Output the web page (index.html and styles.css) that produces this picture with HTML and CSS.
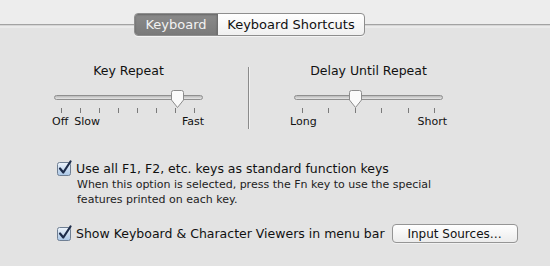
FILE: index.html
```html
<!DOCTYPE html>
<html>
<head>
<meta charset="utf-8">
<link rel="stylesheet" href="styles.css">
</head>
<body>
<div class="toolbar">
  <div class="segmented">
    <div class="seg seg-on">Keyboard</div>
    <div class="seg">Keyboard Shortcuts</div>
  </div>
</div>
<div class="content">
  <div class="sliders">
    <div class="slider-group left">
      <div class="title">Key Repeat</div>
      <div class="track-wrap">
        <div class="track"></div>
        <svg class="thumb" style="left:82.5%" width="15" height="19" viewBox="0 0 15 19"><path d="M1.5 2.5 Q1.5 0.5 3.5 0.5 H11.5 Q13.5 0.5 13.5 2.5 V10 L7.5 17.5 L1.5 10 Z" fill="#fafafa" stroke="#8c8c8c" stroke-width="1"/></svg>
      </div>
      <div class="ticks ticks-left"><i></i><i></i><i></i><i></i><i></i><i></i><i></i><i></i></div>
      <div class="labels"><span>Off</span><span class="slow">Slow</span><span class="grow"></span><span>Fast</span></div>
    </div>
    <div class="divider"></div>
    <div class="slider-group right">
      <div class="title">Delay Until Repeat</div>
      <div class="track-wrap">
        <div class="track"></div>
        <svg class="thumb" style="left:41%" width="15" height="19" viewBox="0 0 15 19"><path d="M1.5 2.5 Q1.5 0.5 3.5 0.5 H11.5 Q13.5 0.5 13.5 2.5 V10 L7.5 17.5 L1.5 10 Z" fill="#fafafa" stroke="#8c8c8c" stroke-width="1"/></svg>
      </div>
      <div class="ticks ticks-right"><i></i><i></i><i></i><i></i><i></i><i></i></div>
      <div class="labels"><span>Long</span><span class="grow"></span><span>Short</span></div>
    </div>
  </div>

  <div class="option opt1">
    <svg class="check" width="17" height="17" viewBox="0 0 17 17"><defs><linearGradient id="cb1" x1="0" y1="0" x2="0" y2="1"><stop offset="0" stop-color="#eef4fb"/><stop offset="1" stop-color="#a9c6e6"/></linearGradient></defs><rect x="0.5" y="2.5" width="13" height="13" rx="2" fill="url(#cb1)" stroke="#6f7f93"/><path d="M3 8.5 L6.3 12.5 L13.5 1.5" fill="none" stroke="#1d2c4a" stroke-width="2.2" stroke-linecap="round" stroke-linejoin="round"/></svg>
    <div class="opt-text">
      <div class="label">Use all F1, F2, etc. keys as standard function keys</div>
      <div class="desc">When this option is selected, press the Fn key to use the special<br>features printed on each key.</div>
    </div>
  </div>

  <div class="option opt2">
    <svg class="check" width="17" height="17" viewBox="0 0 17 17"><defs><linearGradient id="cb2" x1="0" y1="0" x2="0" y2="1"><stop offset="0" stop-color="#eef4fb"/><stop offset="1" stop-color="#a9c6e6"/></linearGradient></defs><rect x="0.5" y="2.5" width="13" height="13" rx="2" fill="url(#cb2)" stroke="#6f7f93"/><path d="M3 8.5 L6.3 12.5 L13.5 1.5" fill="none" stroke="#1d2c4a" stroke-width="2.2" stroke-linecap="round" stroke-linejoin="round"/></svg>
    <div class="label">Show Keyboard &amp; Character Viewers in menu bar</div>
    <button class="btn">Input Sources…</button>
  </div>
</div>
</body>
</html>
```

FILE: styles.css
```css
html, body {
  margin: 0;
  padding: 0;
}
body {
  width: 550px;
  height: 266px;
  overflow: hidden;
  background: #e3e3e3;
  font-family: "DejaVu Sans", "Liberation Sans", sans-serif;
  font-size: 12px;
  color: #111;
}
.toolbar {
  height: 25px;
  box-sizing: border-box;
  background: #ededed;
  border-bottom: 1px solid #a3a3a3;
  box-shadow: 0 1px 0 #d6d6d6, 0 3px 0 #ebebeb;
  display: flex;
  align-items: flex-start;
  padding: 13px 0 0 134px;
}
.segmented {
  display: flex;
  height: 23px;
  box-sizing: border-box;
  border: 1px solid #8e8e8e;
  border-radius: 4px;
  overflow: hidden;
  background: linear-gradient(#ffffff, #f0f0f0);
  box-shadow: 0 1px 0 rgba(255,255,255,0.6);
}
.seg {
  display: flex;
  align-items: center;
  justify-content: center;
  font-size: 13px;
  color: #111;
  width: 146px;
}
.seg-on {
  width: 82px;
  background: linear-gradient(#8a8a8a, #7a7a7a);
  color: #f2f2f2;
  border-right: 1px solid #6e6e6e;
  box-shadow: inset 0 1px 2px rgba(0,0,0,0.25);
}
.content {
  padding-top: 38px;
}
.sliders {
  display: flex;
  align-items: flex-start;
}
.slider-group {
  display: flex;
  flex-direction: column;
}
.slider-group.left {
  width: 152px;
  margin-left: 52px;
}
.slider-group.right {
  width: 157px;
  margin-left: 41px;
}
.divider {
  width: 1px;
  height: 62px;
  background: #8b8b8b;
  margin-left: 44px;
  margin-top: 4px;
  box-shadow: 1px 0 0 #f2f2f2;
}
.title {
  text-align: center;
  font-size: 12.5px;
  height: 16px;
  line-height: 16px;
  color: #111;
}
.left .title { padding-left: 1px; }
.track-wrap {
  position: relative;
  margin-top: 16px;
  height: 5px;
}
.left .track-wrap { margin-left: 2px; margin-right: 1px; }
.right .track-wrap { margin-left: 4px; margin-right: 4px; }
.track {
  height: 5px;
  box-sizing: border-box;
  border: 1px solid #8f8f8f;
  border-radius: 3px;
  background: linear-gradient(#b9b9b9, #e6e6e6);
}
.thumb {
  position: absolute;
  top: -5px;
  margin-left: -7px;
}
.ticks {
  display: flex;
  justify-content: space-between;
  margin-top: 8px;
  height: 5px;
}
.ticks i {
  width: 1px;
  height: 5px;
  background: #7a7a7a;
}
.ticks-left { padding: 0 9px 0 9px; }
.ticks-right { padding: 0 12px 0 12px; }
.labels {
  display: flex;
  margin-top: 2px;
  font-size: 11px;
  line-height: 13px;
  color: #111;
}
.labels .grow { flex: 1; }
.labels .slow { margin-left: 6px; }
.option {
  display: flex;
  margin-left: 57px;
}
.check {
  flex: none;
  margin-right: 2px;
}
.opt1 {
  margin-top: 31px;
  align-items: flex-start;
}
.label {
  font-size: 12.5px;
  line-height: 17px;
  color: #111;
}
.desc {
  font-size: 11px;
  line-height: 15px;
  color: #222;
  margin-left: 1px;
  margin-top: 0;
}
.opt2 {
  margin-top: 17px;
  align-items: center;
}
.btn {
  margin-left: 7px;
  height: 19px;
  width: 126px;
  padding: 0;
  font-family: inherit;
  font-size: 12px;
  color: #111;
  border: 1px solid #959595;
  border-radius: 4px;
  background: linear-gradient(#ffffff, #ececec);
  box-shadow: 0 1px 0 rgba(255,255,255,0.5);
}
```
